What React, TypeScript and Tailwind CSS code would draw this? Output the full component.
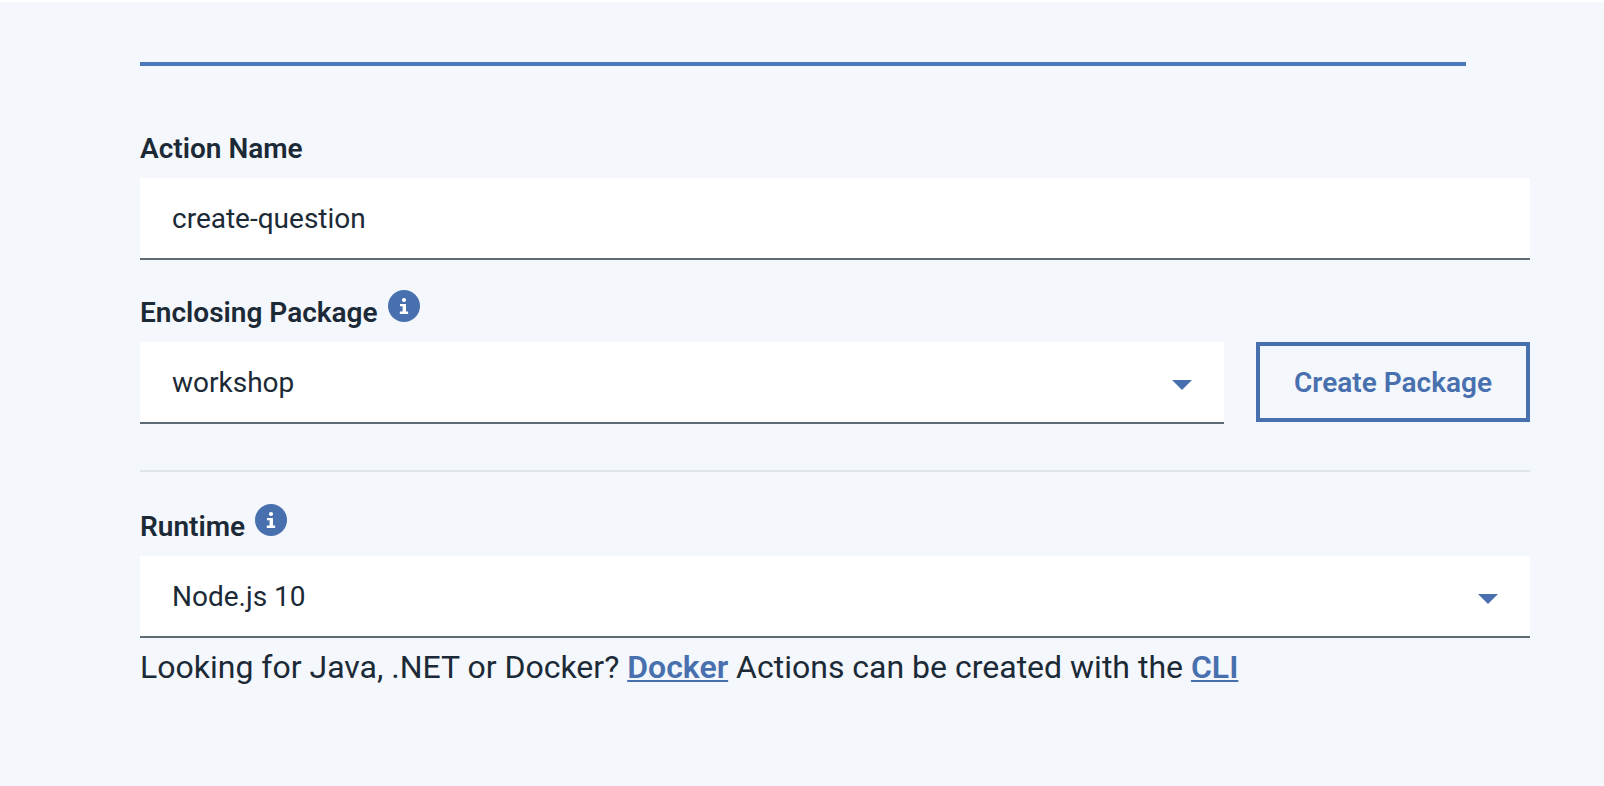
import type { ReactNode } from "react";

function InfoButton({ label }: { label: string }) {
  return (
    <button type="button" aria-label={label} className="size-8 shrink-0">
      <svg viewBox="0 0 32 32" className="size-8" aria-hidden="true">
        <circle cx="16" cy="16" r="16" fill="#4870ae" />
        <circle cx="16" cy="10" r="2.1" fill="#fff" />
        <path d="M12 14h6v7.6h2.1V24h-8.3v-2.4h2.8v-5.3H12z" fill="#fff" />
      </svg>
    </button>
  );
}

function LabelRow({ htmlFor, text, children }: { htmlFor: string; text: string; children?: ReactNode }) {
  return (
    <div className="flex h-13 items-start gap-[10px]">
      <label htmlFor={htmlFor} className="pt-[5px] text-[28px] leading-9 font-semibold">
        {text}
      </label>
      {children}
    </div>
  );
}

function Select({ id, value }: { id: string; value: string }) {
  return (
    <div className="relative min-w-0 flex-1">
      <select
        id={id}
        defaultValue={value}
        className="block h-[82px] w-full appearance-none rounded-none border-b-2 border-[#5f6b74] bg-white px-8 pt-[2px] text-[28px] outline-none"
      >
        <option>{value}</option>
      </select>
      <svg
        viewBox="0 0 20 10"
        className="pointer-events-none absolute top-[38px] right-8 h-[10px] w-5"
        aria-hidden="true"
      >
        <path d="M0 0h20L10 10z" fill="#4870ae" />
      </svg>
    </div>
  );
}

export default function App() {
  return (
    <main className="min-h-screen border-t-2 border-white bg-[#f4f7fc] pt-15 pr-[74px] pb-20 pl-[140px] font-['Roboto','Liberation_Sans',sans-serif] text-[#1b2a36]">
      <div className="mr-16 h-1 bg-[#4b78b9]" />
      <form className="pt-15">
        <LabelRow htmlFor="action-name" text="Action Name" />
        <input
          id="action-name"
          type="text"
          defaultValue="create-question"
          className="block h-[82px] w-full border-b-2 border-[#5f6b74] bg-white px-8 text-[28px] outline-none"
        />

        <div className="mt-[30px]">
          <LabelRow htmlFor="package" text="Enclosing Package">
            <InfoButton label="About enclosing packages" />
          </LabelRow>
          <div className="flex items-start gap-8">
            <Select id="package" value="workshop" />
            <button
              type="button"
              className="h-20 w-[274px] border-4 border-[#4870ae] pt-[2px] text-[28px] font-semibold text-[#4870ae]"
            >
              Create Package
            </button>
          </div>
        </div>

        <hr className="mt-[46px] border-t-2 border-[#e0e5eb]" />

        <div className="mt-8">
          <LabelRow htmlFor="runtime" text="Runtime">
            <InfoButton label="About runtimes" />
          </LabelRow>
          <div className="flex">
            <Select id="runtime" value="Node.js 10" />
          </div>
          <p className="mt-[7px] text-[32px] leading-11">
            Looking for Java, .NET or Docker?{" "}
            <a href="#docker" className="font-semibold text-[#4870ae] underline decoration-2 underline-offset-2">
              Docker
            </a>{" "}
            Actions can be created with the{" "}
            <a href="#cli" className="font-semibold text-[#4870ae] underline decoration-2 underline-offset-2">
              CLI
            </a>
          </p>
        </div>
      </form>
    </main>
  );
}
